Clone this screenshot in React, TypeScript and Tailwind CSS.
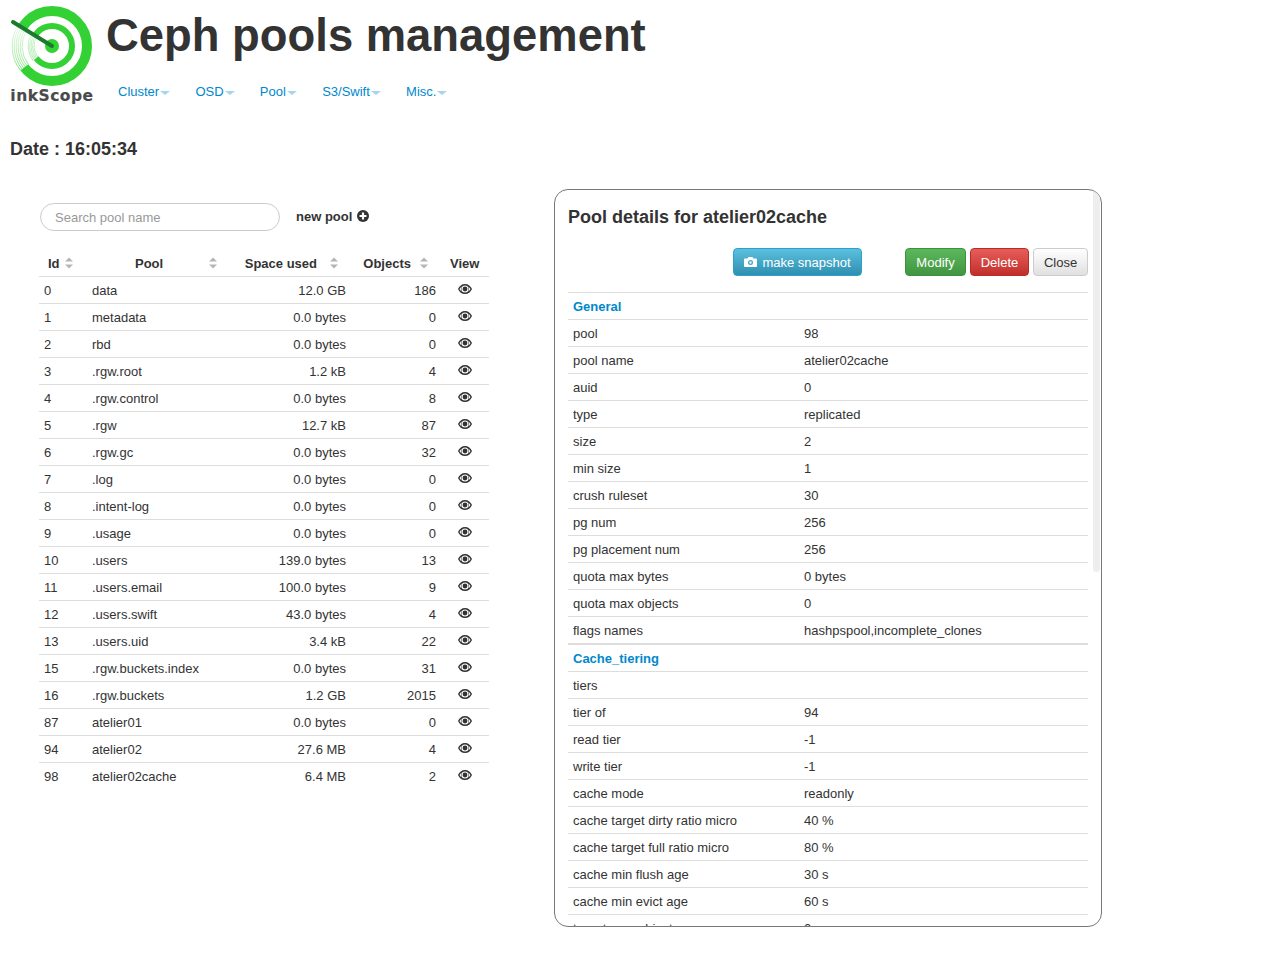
import { CSSProperties } from 'react';

const POOLS = [
  ['0', 'data', '12.0 GB', '186'],
  ['1', 'metadata', '0.0 bytes', '0'],
  ['2', 'rbd', '0.0 bytes', '0'],
  ['3', '.rgw.root', '1.2 kB', '4'],
  ['4', '.rgw.control', '0.0 bytes', '8'],
  ['5', '.rgw', '12.7 kB', '87'],
  ['6', '.rgw.gc', '0.0 bytes', '32'],
  ['7', '.log', '0.0 bytes', '0'],
  ['8', '.intent-log', '0.0 bytes', '0'],
  ['9', '.usage', '0.0 bytes', '0'],
  ['10', '.users', '139.0 bytes', '13'],
  ['11', '.users.email', '100.0 bytes', '9'],
  ['12', '.users.swift', '43.0 bytes', '4'],
  ['13', '.users.uid', '3.4 kB', '22'],
  ['15', '.rgw.buckets.index', '0.0 bytes', '31'],
  ['16', '.rgw.buckets', '1.2 GB', '2015'],
  ['87', 'atelier01', '0.0 bytes', '0'],
  ['94', 'atelier02', '27.6 MB', '4'],
  ['98', 'atelier02cache', '6.4 MB', '2'],
];

const GENERAL = [
  ['pool', '98'],
  ['pool name', 'atelier02cache'],
  ['auid', '0'],
  ['type', 'replicated'],
  ['size', '2'],
  ['min size', '1'],
  ['crush ruleset', '30'],
  ['pg num', '256'],
  ['pg placement num', '256'],
  ['quota max bytes', '0 bytes'],
  ['quota max objects', '0'],
  ['flags names', 'hashpspool,incomplete_clones'],
];

const TIERING = [
  ['tiers', ''],
  ['tier of', '94'],
  ['read tier', '-1'],
  ['write tier', '-1'],
  ['cache mode', 'readonly'],
  ['cache target dirty ratio micro', '40 %'],
  ['cache target full ratio micro', '80 %'],
  ['cache min flush age', '30 s'],
  ['cache min evict age', '60 s'],
  ['target max objects', '0'],
];

const NAV = ['Cluster', 'OSD', 'Pool', 'S3/Swift', 'Misc.'];

// pale grooves on the left side of the target
const GROOVES = [40, 38, 36, 34, 32, 30, 24, 22.500, 21, 19.500, 18];

function groovePath(r: number) {
  const x1 = 42 - 0.85 * r;
  const y1 = 41 - 0.52 * r;
  const x2 = 42 - 0.79 * r;
  const y2 = 41 + 0.61 * r;
  return `M${x1} ${y1}A${r} ${r} 0 0 0 ${x2} ${y2}`;
}

function Logo() {
  return (
    <div className="flex w-[96px] shrink-0 flex-col items-center">
      <svg width="84" height="82" viewBox="0 0 84 82" className="mt-[5px]">
        <defs>
          <linearGradient id="groove" gradientUnits="userSpaceOnUse" x1="0" y1="20" x2="0" y2="72">
            <stop offset="0" stopColor="#e4f8e4" />
            <stop offset="0.6" stopColor="#a8eaa8" />
            <stop offset="1" stopColor="#4fd84f" />
          </linearGradient>
        </defs>
        <circle cx="42" cy="41" r="35" fill="none" stroke="#33d133" strokeWidth="10" />
        <circle cx="42" cy="41" r="20" fill="none" stroke="#33d133" strokeWidth="6" />
        <polygon points="42,41 4,17 -2,41 7,68" fill="#fff" />
        <circle cx="42" cy="41" r="7" fill="#33d133" />
        {GROOVES.map((r) => (
          <path key={r} d={groovePath(r)} fill="none" stroke="url(#groove)" strokeWidth="0.9" />
        ))}
        <path d="M3 17 L42 41" stroke="#1a7a2e" strokeWidth="4" strokeLinecap="round" />
      </svg>
      <div className="mt-[-1px] font-['DejaVu_Sans'] text-[15.5px] leading-[20px] font-bold tracking-[0.5px] text-[#4a4a4a] [-webkit-text-stroke:0.15px_#4a4a4a]">inkScope</div>
    </div>
  );
}

function SortIcon() {
  return (
    <svg width="8" height="12" viewBox="0 0 8 12" className="shrink-0">
      <path d="M4 0.5 8 4.5H0zM4 11.5 0 7.5h8z" fill="#b5b5b5" />
    </svg>
  );
}

function EyeIcon({ style }: { style?: CSSProperties }) {
  return (
    <svg width="14" height="10" viewBox="0 0 14 10" style={style}>
      <path
        fillRule="evenodd"
        d="M7 0C3.800 0 1.300 2 0 5c1.300 3 3.800 5 7 5s5.700-2 7-5c-1.300-3-3.800-5-7-5zM7 8.600A3.600 3.600 0 1 1 7 1.400a3.600 3.600 0 0 1 0 7.200zM1.500 5c.6-1.100 1.300-1.900 2.300-2.600A4.400 4.400 0 0 0 3.800 7.600C2.800 6.900 2.100 6.100 1.500 5zM12.500 5c-.6 1.100-1.300 1.900-2.300 2.600a4.400 4.400 0 0 0 0-5.200c1 .7 1.700 1.500 2.300 2.600zM7 2.600A2.400 2.400 0 1 1 7 7.400 2.400 2.400 0 0 1 7 2.600z"
        fill="#333"
      />
    </svg>
  );
}

function PoolTable() {
  return (
    <table className="mt-[20px] w-[450px] table-fixed border-collapse text-[13px] text-[#333]">
      <colgroup>
        <col className="w-[48px]" />
        <col className="w-[134px]" />
        <col className="w-[131px]" />
        <col className="w-[91px]" />
        <col className="w-[46px]" />
      </colgroup>
      <thead>
        <tr className="h-[25px] border-b border-[#ddd] font-bold">
          <th className="p-0 pl-[9px] text-left">
            <span className="flex items-center gap-[5px]">Id <SortIcon /></span>
          </th>
          <th className="p-0 pr-[1px]">
            <span className="flex items-center justify-between pr-[3px] pl-[48px]">Pool <SortIcon /></span>
          </th>
          <th className="p-0 text-right">
            <span className="flex items-center justify-end gap-[13px] pr-[14px]">Space used <SortIcon /></span>
          </th>
          <th className="p-0 text-right">
            <span className="flex items-center justify-end gap-[9px] pr-[15px]">Objects <SortIcon /></span>
          </th>
          <th className="p-0 pl-[7px] text-left">View</th>
        </tr>
      </thead>
      <tbody>
        {POOLS.map(([id, name, used, objects]) => (
          <tr key={id} className="h-[27px] border-b border-[#ddd] last:border-b-0">
            <td className="p-0 pt-[2px] pl-[5px]">{id}</td>
            <td className="p-0 pt-[2px] pl-[5px]">{name}</td>
            <td className="p-0 pt-[2px] pr-[6px] text-right">{used}</td>
            <td className="p-0 pt-[2px] pr-[7px] text-right">{objects}</td>
            <td className="p-0 pl-[15px]">
              <EyeIcon style={{ display: 'block', marginTop: -1 }} />
            </td>
          </tr>
        ))}
      </tbody>
    </table>
  );
}

function DetailRows({ rows, thickLast }: { rows: string[][]; thickLast?: boolean }) {
  return (
    <>
      {rows.map(([label, value], i) =>
        thickLast && i === rows.length - 1 ? (
          <div key={label} className="flex h-[28px] items-center border-b-2 border-[#ddd] pt-[1px] pl-[5px]">
            <span className="w-[231px] shrink-0">{label}</span>
            <span>{value}</span>
          </div>
        ) : (
          <div key={label} className="flex h-[27px] items-center border-b border-[#ddd] pt-[2px] pl-[5px]">
            <span className="w-[231px] shrink-0">{label}</span>
            <span>{value}</span>
          </div>
        ),
      )}
    </>
  );
}

function Section({ title }: { title: string }) {
  return (
    <div className="flex h-[27px] items-center border-b border-[#ddd] pt-[2px] pl-[5px] font-bold text-[#0088cc]">{title}</div>
  );
}

function DetailsPanel() {
  return (
    <div className="relative ml-[65px] h-[738px] w-[548px] shrink-0 overflow-hidden rounded-[14px] border border-[#777] text-[13px] text-[#333]">
      <div className="absolute top-0 right-[1px] h-[382px] w-[7px] rounded-b-[4px] bg-[#eee]" />
      <div className="px-[13px]">
        <h2 className="mt-[15px] text-[18px] leading-[25px] font-bold text-[#333]">Pool details for atelier02cache</h2>
        <div className="mt-[17px] flex h-[29px] items-center">
          <button className="ml-[165px] flex h-[28px] w-[129px] items-center justify-center gap-[5px] rounded-[4px] border border-[#28a4c9] bg-gradient-to-b from-[#5bc0de] to-[#2f8fb0] pt-[2px] text-[13px] text-white">
            <svg width="13" height="10" viewBox="0 0 13 10" className="mb-[2px]">
              <path
                fillRule="evenodd"
                d="M1 1.500h2.500L4.500 0h4l1 1.500H12a1 1 0 0 1 1 1V9a1 1 0 0 1-1 1H1a1 1 0 0 1-1-1V2.500a1 1 0 0 1 1-1zM6.500 3a2.500 2.500 0 1 0 0 5 2.500 2.500 0 0 0 0-5zM6.500 4.300a1.200 1.200 0 1 1 0 2.400 1.200 1.200 0 0 1 0-2.400z"
                fill="#fff"
              />
            </svg>
            make snapshot
          </button>
          <button className="ml-[43px] h-[28px] w-[61px] rounded-[4px] border border-[#3e8f3e] bg-gradient-to-b from-[#5cb85c] to-[#419641] pt-[2px] text-[13px] text-white">Modify</button>
          <button className="ml-[4px] h-[28px] w-[59px] rounded-[4px] border border-[#b92c28] bg-gradient-to-b from-[#e85d5a] to-[#c12e2a] pt-[2px] text-[13px] text-white">Delete</button>
          <button className="ml-[4px] h-[28px] w-[55px] rounded-[4px] border border-[#ccc] bg-gradient-to-b from-white to-[#e0e0e0] pt-[2px] text-[13px] text-[#333]">Close</button>
        </div>
        <div className="mt-[16px] border-t border-[#ddd]">
          <Section title="General" />
          <DetailRows rows={GENERAL} thickLast />
          <Section title="Cache_tiering" />
          <DetailRows rows={TIERING} />
        </div>
      </div>
    </div>
  );
}

export default function App() {
  return (
    <div className="h-[960px] w-[1280px] overflow-hidden bg-white font-['Liberation_Sans',sans-serif] text-[#333]">
      <header className="flex pl-[4px]">
        <Logo />
        <div className="ml-[6px]">
          <h1 className="mt-[10px] text-[45.4px] leading-[52px] font-bold whitespace-nowrap text-[#333]">Ceph pools management</h1>
          <nav className="mt-[21px] flex pl-[12px] text-[13px] leading-[18px] text-[#0088cc]">
            {NAV.map((item) => (
              <div key={item} className="mr-[25.25px] flex items-center">
                <span>{item}</span>
                <span className="mt-[2px] ml-[1px] h-0 w-0 border-x-[5px] border-t-[4px] border-x-transparent border-t-[#a6d5f0]" />
              </div>
            ))}
          </nav>
        </div>
      </header>
      <div className="mt-[32px] pl-[10px] text-[18px] leading-[22px] font-bold text-[#333]">Date : 16:05:34</div>
      <main className="mt-[29px] flex pl-[39px]">
        <div className="w-[450px] shrink-0">
          <div className="mt-[14px] flex items-center">
            <input
              placeholder="Search pool name"
              className="ml-[1px] h-[28px] w-[240px] rounded-full border border-[#ccc] px-[14px] text-[13px] outline-none placeholder:text-[#999]"
            />
            <span className="ml-[16px] text-[13px] font-bold">new pool</span>
            <svg width="12" height="12" viewBox="0 0 12 12" className="mb-[2px] ml-[5px]">
              <circle cx="6" cy="6" r="6" fill="#333" />
              <path d="M6 2.500v7M2.500 6h7" stroke="#fff" strokeWidth="2.200" />
            </svg>
          </div>
          <PoolTable />
        </div>
        <DetailsPanel />
      </main>
    </div>
  );
}
